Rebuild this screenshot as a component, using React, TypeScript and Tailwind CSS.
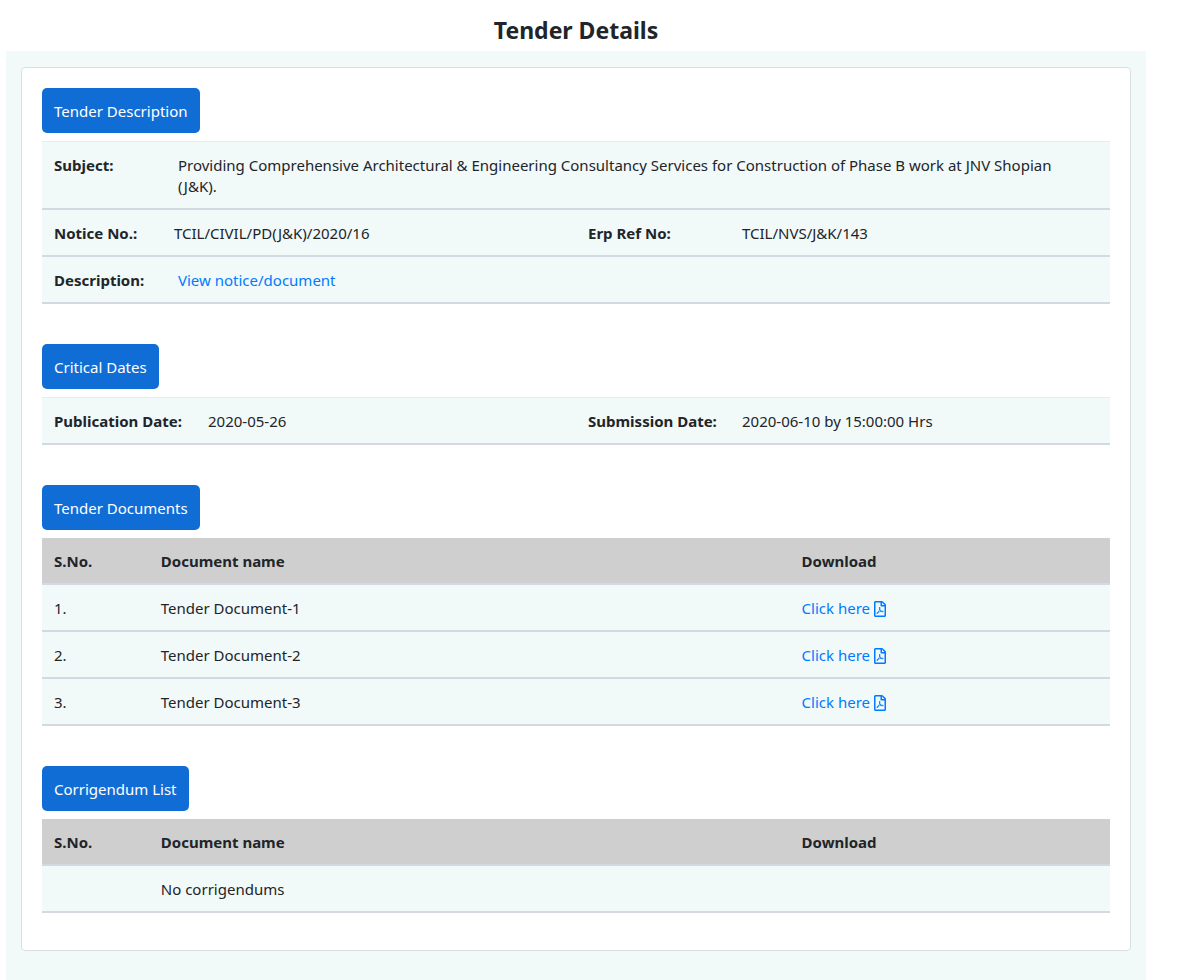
import type { ReactNode } from 'react';
import { FaRegFilePdf } from 'react-icons/fa';

const documents = ['Tender Document-1', 'Tender Document-2', 'Tender Document-3'];

const rowClass = 'border-b-2 border-[#d5d8e2] bg-[#f1f9f9]';
const paddingClass = 'px-3 pt-[13px] pb-[11px]';
const cellClass = `${paddingClass} text-left align-top`;

function Section({ title, children }: { title: string; children: ReactNode }) {
  return (
    <section>
      <button
        type="button"
        className="mb-2 block rounded-[5px] bg-[#116dd6] px-3 pt-[13px] pb-[11px] text-white"
      >
        {title}
      </button>
      {children}
    </section>
  );
}

function DocumentTable({ children }: { children: ReactNode }) {
  return (
    <table className="w-full table-fixed">
      <thead>
        <tr className="border-b-2 border-[#d5d8e2] bg-[#cfcfcf]">
          <th className={`${cellClass} w-[10%]`}>S.No.</th>
          <th className={`${cellClass} w-[60%]`}>Document name</th>
          <th className={`${cellClass} w-[30%]`}>Download</th>
        </tr>
      </thead>
      <tbody>{children}</tbody>
    </table>
  );
}

export default function App() {
  return (
    <main className="min-h-screen bg-white pr-[46px] pl-[6px] font-['Noto_Sans','Open_Sans',sans-serif] text-[15px] leading-[21px] text-[#212529]">
      <h1 className="pt-[15px] pb-[5px] text-center text-[23px] leading-[31px] font-bold">
        Tender Details
      </h1>

      <div className="bg-[#f1f9f9] px-[15px] pt-4 pb-[30px]">
        <div className="flex flex-col gap-10 rounded border border-[#d9dfdf] bg-white px-5 pt-5 pb-[37px]">
          <Section title="Tender Description">
            <dl className="border-t border-[#e8eced]">
              <div className={`${rowClass} ${paddingClass} flex`}>
                <dt className="w-[124px] shrink-0 font-bold">Subject:</dt>
                <dd className="pr-6">
                  Providing Comprehensive Architectural &amp; Engineering Consultancy Services for
                  Construction of Phase B work at JNV Shopian (J&amp;K).
                </dd>
              </div>
              <div className={`${rowClass} grid grid-cols-2`}>
                <div className={`${paddingClass} flex`}>
                  <dt className="w-[120px] shrink-0 font-bold">Notice No.:</dt>
                  <dd>TCIL/CIVIL/PD(J&amp;K)/2020/16</dd>
                </div>
                <div className={`${paddingClass} flex`}>
                  <dt className="w-[154px] shrink-0 font-bold">Erp Ref No:</dt>
                  <dd>TCIL/NVS/J&amp;K/143</dd>
                </div>
              </div>
              <div className={`${rowClass} ${paddingClass} flex`}>
                <dt className="w-[124px] shrink-0 font-bold">Description:</dt>
                <dd>
                  <a href="#notice" className="text-[#007bff] hover:underline">
                    View notice/document
                  </a>
                </dd>
              </div>
            </dl>
          </Section>

          <Section title="Critical Dates">
            <dl className="border-t border-[#e8eced]">
              <div className={`${rowClass} grid grid-cols-2`}>
                <div className={`${paddingClass} flex`}>
                  <dt className="w-[154px] shrink-0 font-bold">Publication Date:</dt>
                  <dd>2020-05-26</dd>
                </div>
                <div className={`${paddingClass} flex`}>
                  <dt className="w-[154px] shrink-0 font-bold">Submission Date:</dt>
                  <dd>2020-06-10 by 15:00:00 Hrs</dd>
                </div>
              </div>
            </dl>
          </Section>

          <Section title="Tender Documents">
            <DocumentTable>
              {documents.map((name, index) => (
                <tr key={name} className={rowClass}>
                  <td className={cellClass}>{index + 1}.</td>
                  <td className={cellClass}>{name}</td>
                  <td className={cellClass}>
                    <a
                      href={`#document-${index + 1}`}
                      className="inline-flex items-center gap-1 text-[#007bff] hover:underline"
                    >
                      Click here
                      <FaRegFilePdf className="h-4 w-3" />
                    </a>
                  </td>
                </tr>
              ))}
            </DocumentTable>
          </Section>

          <Section title="Corrigendum List">
            <DocumentTable>
              <tr className={rowClass}>
                <td className={cellClass} />
                <td className={cellClass}>No corrigendums</td>
                <td className={cellClass} />
              </tr>
            </DocumentTable>
          </Section>
        </div>
      </div>
    </main>
  );
}
